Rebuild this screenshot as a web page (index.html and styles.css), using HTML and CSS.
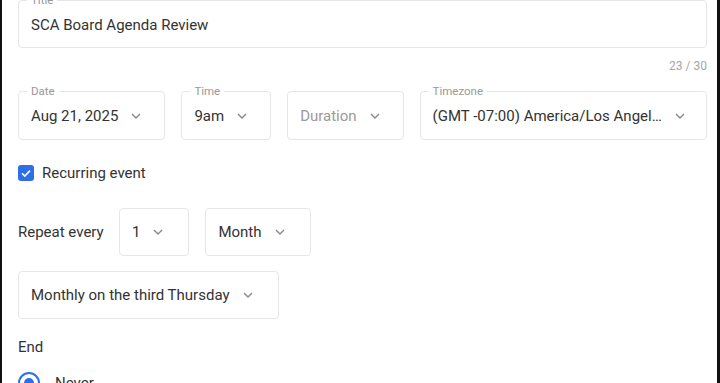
FILE: index.html
```html
<!DOCTYPE html>
<html>
<head>
    <title>Edit Event</title>
    <link rel="stylesheet" href="styles.css">
</head>
<body>
    <div class="frame">
        <form class="event-form">
            <div class="field title-field">
                <span class="field-label">Title</span>
                <span class="field-value">SCA Board Agenda Review</span>
            </div>
            <div class="counter">23 / 30</div>

            <div class="row">
                <div class="field select">
                    <span class="field-label">Date</span>
                    <span class="field-value">Aug 21, 2025</span>
                    <svg class="chevron" viewBox="0 0 10 6"><path d="M1 1L5 5L9 1"/></svg>
                </div>
                <div class="field select">
                    <span class="field-label">Time</span>
                    <span class="field-value">9am</span>
                    <svg class="chevron" viewBox="0 0 10 6"><path d="M1 1L5 5L9 1"/></svg>
                </div>
                <div class="field select">
                    <span class="field-value placeholder">Duration</span>
                    <svg class="chevron" viewBox="0 0 10 6"><path d="M1 1L5 5L9 1"/></svg>
                </div>
                <div class="field select grow">
                    <span class="field-label">Timezone</span>
                    <span class="field-value ellipsis">(GMT -07:00) America/Los Angeles</span>
                    <svg class="chevron" viewBox="0 0 10 6"><path d="M1 1L5 5L9 1"/></svg>
                </div>
            </div>

            <label class="checkbox-row">
                <span class="checkbox">
                    <svg viewBox="0 0 16 16"><path d="M4 8.2L6.8 11L12 5.6"/></svg>
                </span>
                Recurring event
            </label>

            <div class="repeat-row">
                <span class="text repeat-label">Repeat every</span>
                <div class="field select">
                    <span class="field-value">1</span>
                    <svg class="chevron" viewBox="0 0 10 6"><path d="M1 1L5 5L9 1"/></svg>
                </div>
                <div class="field select">
                    <span class="field-value">Month</span>
                    <svg class="chevron" viewBox="0 0 10 6"><path d="M1 1L5 5L9 1"/></svg>
                </div>
            </div>

            <div class="monthly-row">
                <div class="field select">
                    <span class="field-value">Monthly on the third Thursday</span>
                    <svg class="chevron" viewBox="0 0 10 6"><path d="M1 1L5 5L9 1"/></svg>
                </div>
            </div>

            <div class="text end-label">End</div>

            <label class="radio-row">
                <span class="radio"></span>
                Never
            </label>
        </form>
    </div>
</body>
</html>
```

FILE: styles.css
```css
* {
    margin: 0;
    padding: 0;
    box-sizing: border-box;
    font-family: Roboto, 'Liberation Sans', sans-serif;
}

html, body {
    height: 100%;
    overflow: hidden;
    background: #fff;
}

.frame {
    height: 100%;
    border-left: 2px solid #111;
    border-right: 3px solid #111;
    padding: 0 10px 0 16px;
}

.event-form {
    color: #333;
}

.field {
    position: relative;
    height: 48px;
    border: 1px solid #e6e6e6;
    border-radius: 4px;
    display: flex;
    align-items: center;
    padding: 0 12px;
    font-size: 15px;
    background: #fff;
}

.title-field {
    padding-top: 2px;
}

.field-label {
    position: absolute;
    top: -8px;
    left: 8px;
    padding: 0 4px;
    background: #fff;
    font-size: 11.5px;
    line-height: 14px;
    color: #999;
}

.field-value {
    white-space: nowrap;
}

.placeholder {
    color: #9a9a9a;
}

.ellipsis {
    overflow: hidden;
    text-overflow: ellipsis;
    flex: 1;
}

.select {
    padding-right: 23px;
    gap: 13px;
}

.select.grow {
    padding-right: 21px;
    gap: 10px;
}

.repeat-row .select,
.monthly-row .select {
    padding-right: 25px;
}

.chevron {
    width: 10px;
    height: 6px;
    flex-shrink: 0;
    fill: none;
    stroke: #888;
    stroke-width: 1.4;
}

.counter {
    text-align: right;
    font-size: 12px;
    color: #a6a6a6;
    margin-top: 11px;
    line-height: 14px;
}

.row {
    display: flex;
    gap: 16px;
    margin-top: 18px;
}

.row .field {
    height: 49px;
}

.grow {
    flex: 1;
    min-width: 0;
}

.checkbox-row {
    display: flex;
    align-items: center;
    gap: 8px;
    margin-top: 24px;
    font-size: 15px;
    line-height: 18px;
}

.checkbox {
    width: 16px;
    height: 16px;
    border-radius: 3px;
    background: #2e6fe6;
    display: flex;
}

.checkbox svg {
    width: 16px;
    height: 16px;
    fill: none;
    stroke: #fff;
    stroke-width: 1.6;
}

.repeat-row {
    display: flex;
    align-items: center;
    gap: 16px;
    margin-top: 26px;
}

.repeat-label {
    width: 85px;
    flex-shrink: 0;
    white-space: nowrap;
}

.text {
    font-size: 15px;
}

.monthly-row {
    display: flex;
    margin-top: 15px;
}

.end-label {
    margin-top: 19px;
    line-height: 18px;
}

.radio-row {
    display: flex;
    align-items: center;
    gap: 15px;
    margin-top: 16px;
    font-size: 15px;
}

.radio {
    width: 22px;
    height: 22px;
    border-radius: 50%;
    border: 2px solid #2e6fe6;
    display: flex;
    align-items: center;
    justify-content: center;
}

.radio::after {
    content: '';
    width: 10px;
    height: 10px;
    border-radius: 50%;
    background: #2e6fe6;
}
```
